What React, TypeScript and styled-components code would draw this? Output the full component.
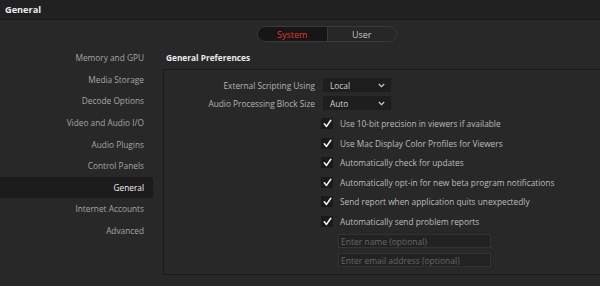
import React from "react";
import styled, { createGlobalStyle } from "styled-components";

const Global = createGlobalStyle`
  html, body { margin: 0; padding: 0; background: #282828; }
  body { font-family: "Open Sans", "Noto Sans", sans-serif; -webkit-font-smoothing: antialiased; }
  * { box-sizing: border-box; }
`;

const Page = styled.div`
  width: 600px;
  height: 286px;
  overflow: hidden;
  background: #282828;
  display: flex;
  flex-direction: column;
`;

const TitleBar = styled.div`
  height: 20px;
  flex: none;
  background: #212121;
  border-bottom: 1px solid #181818;
  display: flex;
  align-items: center;
  padding-left: 5px;
  color: #ececec;
  font-size: 9.2px;
  font-weight: 700;
`;

const TabRow = styled.div`
  height: 26px;
  flex: none;
  display: flex;
  align-items: center;
  padding-left: 257px;
  padding-top: 2px;
`;

const Segmented = styled.div`
  display: flex;
  width: 140px;
  height: 16px;
  border-radius: 8px;
  border: 1px solid #3a3a3a;
  overflow: hidden;
  background: #2a2a2a;
`;

const Segment = styled.div<{ $active?: boolean }>`
  flex: 1;
  display: flex;
  align-items: center;
  justify-content: center;
  font-size: 9px;
  color: ${(p) => (p.$active ? "#e0362c" : "#c4c4c4")};
  background: ${(p) => (p.$active ? "#161616" : "#272727")};
  border-right: ${(p) => (p.$active ? "1px solid #3a3a3a" : "none")};
`;

const Body = styled.div`
  flex: 1;
  display: flex;
  min-height: 0;
`;

const Sidebar = styled.div`
  width: 153px;
  flex: none;
  display: flex;
  flex-direction: column;
  padding-top: 1px;
`;

const NavItem = styled.div<{ $active?: boolean }>`
  height: 21.6px;
  display: flex;
  align-items: center;
  justify-content: flex-end;
  padding-right: 9px;
  font-size: 8.3px;
  color: ${(p) => (p.$active ? "#f2f2f2" : "#a6a6a6")};
  background: ${(p) => (p.$active ? "#1b1b1b" : "transparent")};
  border-radius: 0 2px 2px 0;
`;

const Content = styled.div`
  flex: 1;
  display: flex;
  flex-direction: column;
  padding-left: 10px;
`;

const Heading = styled.div`
  height: 23px;
  display: flex;
  align-items: center;
  padding-left: 3px;
  font-size: 8.3px;
  font-weight: 700;
  color: #ececec;
`;

const Panel = styled.div`
  width: 460px;
  height: 206px;
  border: 1px solid #1a1a1a;
  border-right: none;
  background: #282828;
  padding-top: 8px;
  display: flex;
  flex-direction: column;
`;

const FieldRow = styled.div`
  display: grid;
  grid-template-columns: 151px 68px;
  column-gap: 8px;
  align-items: center;
  height: 14px;
  margin-bottom: 4px;
`;

const FieldLabel = styled.div`
  text-align: right;
  font-size: 8.3px;
  color: #b4b4b4;
`;

const Select = styled.div`
  height: 14px;
  background: #1e1e1e;
  display: flex;
  align-items: center;
  justify-content: space-between;
  padding: 0 6px 0 7px;
  font-size: 8.3px;
  color: #d2d2d2;
`;

const Checks = styled.div`
  display: flex;
  flex-direction: column;
  padding-left: 157px;
`;

const CheckRow = styled.div`
  height: 19.5px;
  display: flex;
  align-items: center;
  gap: 7px;
  font-size: 8.3px;
  color: #bdbdbd;
`;

const Box = styled.div`
  width: 12px;
  height: 11px;
  background: #1a1a1a;
  display: flex;
  align-items: center;
  justify-content: center;
`;

const Inputs = styled.div`
  display: flex;
  flex-direction: column;
  gap: 5px;
  padding-left: 174px;
  padding-top: 3px;
`;

const Input = styled.div`
  width: 153px;
  height: 14px;
  background: #222222;
  border: 1px solid #333333;
  display: flex;
  align-items: center;
  padding-left: 2px;
  font-size: 8.5px;
  color: #666666;
`;

const Chevron = () => (
  <svg width="7" height="5" viewBox="0 0 7 5">
    <path d="M0.8 1 L3.5 3.7 L6.2 1" fill="none" stroke="#cfcfcf" strokeWidth="1.1" />
  </svg>
);

const Check = () => (
  <svg width="9" height="9" viewBox="0 0 9 9">
    <path d="M1.3 4.8 L3.5 7.4 L7.8 1.3" fill="none" stroke="#f4f4f4" strokeWidth="1.6" strokeLinecap="round" strokeLinejoin="round" />
  </svg>
);

const nav = [
  "Memory and GPU",
  "Media Storage",
  "Decode Options",
  "Video and Audio I/O",
  "Audio Plugins",
  "Control Panels",
  "General",
  "Internet Accounts",
  "Advanced",
];

const checks = [
  "Use 10-bit precision in viewers if available",
  "Use Mac Display Color Profiles for Viewers",
  "Automatically check for updates",
  "Automatically opt-in for new beta program notifications",
  "Send report when application quits unexpectedly",
  "Automatically send problem reports",
];

export default function App() {
  return (
    <Page>
      <Global />
      <TitleBar>General</TitleBar>
      <TabRow>
        <Segmented>
          <Segment $active>System</Segment>
          <Segment>User</Segment>
        </Segmented>
      </TabRow>
      <Body>
        <Sidebar>
          {nav.map((n) => (
            <NavItem key={n} $active={n === "General"}>
              {n}
            </NavItem>
          ))}
        </Sidebar>
        <Content>
          <Heading>General Preferences</Heading>
          <Panel>
            <FieldRow>
              <FieldLabel>External Scripting Using</FieldLabel>
              <Select>
                Local
                <Chevron />
              </Select>
            </FieldRow>
            <FieldRow>
              <FieldLabel>Audio Processing Block Size</FieldLabel>
              <Select>
                Auto
                <Chevron />
              </Select>
            </FieldRow>
            <Checks>
              {checks.map((c) => (
                <CheckRow key={c}>
                  <Box>
                    <Check />
                  </Box>
                  {c}
                </CheckRow>
              ))}
            </Checks>
            <Inputs>
              <Input>Enter name (optional)</Input>
              <Input>Enter email address (optional)</Input>
            </Inputs>
          </Panel>
        </Content>
      </Body>
    </Page>
  );
}
